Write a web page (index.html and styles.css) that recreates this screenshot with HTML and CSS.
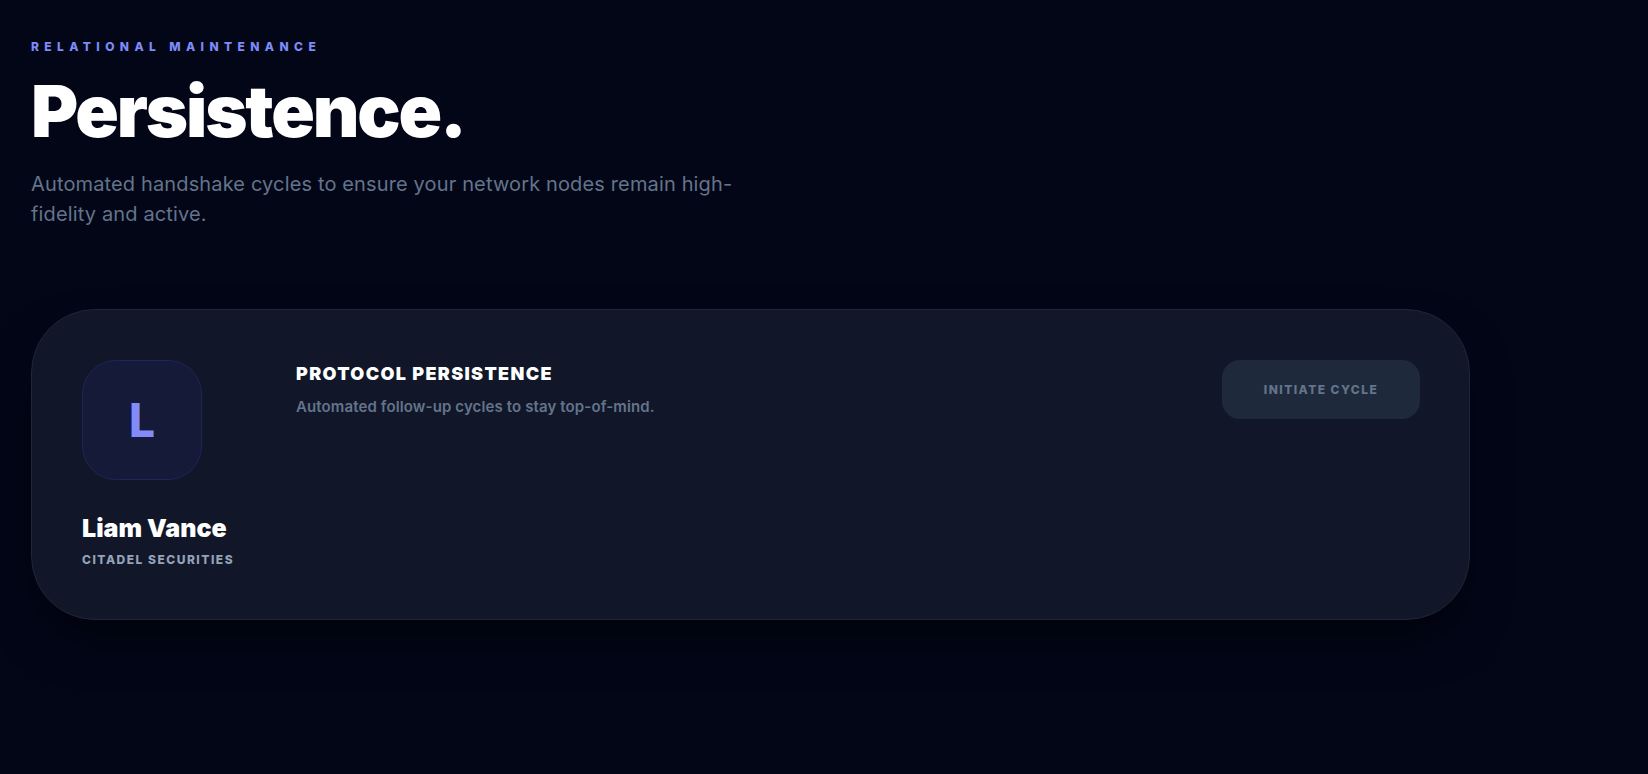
FILE: index.html
```html
<!DOCTYPE html>
<html lang="en">
<head>
    <meta charset="UTF-8">
    <meta name="viewport" content="width=device-width, initial-scale=1.0">
    <title>Persistence</title>
    <link rel="stylesheet" href="styles.css">
</head>
<body>

    <div class="page">
        <div class="intro">
            <p class="eyebrow">Relational Maintenance</p>
            <h1 class="title">Persistence.</h1>
            <p class="lead">Automated handshake cycles to ensure your network nodes remain high-fidelity and active.</p>
        </div>

        <div class="card">
            <div class="contact">
                <div class="avatar">L</div>
                <div class="contact-name">Liam Vance</div>
                <div class="contact-org">Citadel Securities</div>
            </div>

            <div class="protocol">
                <h2 class="protocol-title">Protocol Persistence</h2>
                <p class="protocol-text">Automated follow-up cycles to stay top-of-mind.</p>
            </div>

            <button class="cycle-button">Initiate Cycle</button>
        </div>
    </div>

</body>
</html>
```

FILE: styles.css
```css
body {
    margin: 0;
    padding: 0;
    background-color: #020617; /* почти черный */
    color: #fff;
    font-family: "Inter", "Noto Sans", sans-serif;
    min-height: 100vh;
}

.page {
    padding: 39px 30px 0 31px;
    width: 1439px;
}

/* Заголовок */
.eyebrow {
    margin: 0;
    font-size: 12px;
    font-weight: 800;
    letter-spacing: 0.45em;
    text-transform: uppercase;
    color: #7f8bf7;
    line-height: 16px;
}

.title {
    margin: 20px 0 0 0;
    font-size: 72px;
    font-weight: 900;
    letter-spacing: -0.03em;
    line-height: 72px;
}

.lead {
    margin: 22px 0 0 0;
    max-width: 740px;
    font-size: 20px;
    line-height: 30px;
    letter-spacing: 0.007em;
    color: #64748b;
}

/* Карточка */
.card {
    margin-top: 80px;
    display: flex;
    align-items: flex-start;
    gap: 32px;
    padding: 50px 49px 51px 50px;
    background-color: #111729;
    border: 1px solid #1f2637;
    border-radius: 64px;
    box-shadow: 0 25px 50px -12px rgba(0, 0, 0, 0.6);
}

.contact {
    width: 182px;
    flex-shrink: 0;
}

.avatar {
    width: 118px;
    height: 118px;
    border-radius: 34px;
    background-color: #151a38;
    border: 1px solid #1d2658;
    color: #818cf8;
    font-size: 46px;
    font-weight: 800;
    display: flex;
    align-items: center;
    justify-content: center;
}

.contact-name {
    margin-top: 32px;
    font-size: 25px;
    font-weight: 900;
    letter-spacing: 0;
    line-height: 32px;
}

.contact-org {
    margin-top: 8px;
    font-size: 12px;
    font-weight: 800;
    letter-spacing: 0.125em;
    text-transform: uppercase;
    color: #94a3b8;
    line-height: 16px;
}

.protocol {
    flex: 1;
}

.protocol-title {
    margin: 0;
    font-size: 18px;
    font-weight: 900;
    letter-spacing: 0.075em;
    text-transform: uppercase;
    line-height: 28px;
}

.protocol-text {
    margin: 9px 0 0 0;
    font-size: 15px;
    font-weight: 600;
    letter-spacing: 0.008em;
    color: #64748b;
    line-height: 20px;
}

.cycle-button {
    width: 198px;
    height: 59px;
    border: none;
    border-radius: 18px;
    background-color: #1e293b;
    color: #64748b;
    font-family: inherit;
    font-size: 12px;
    font-weight: 800;
    letter-spacing: 0.12em;
    text-transform: uppercase;
    cursor: pointer;
    flex-shrink: 0;
}
```
